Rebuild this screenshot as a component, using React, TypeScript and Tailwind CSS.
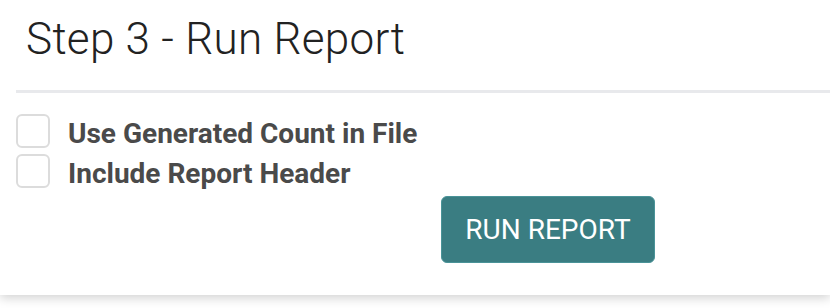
import { useState } from 'react';

const OPTIONS = ['Use Generated Count in File', 'Include Report Header'];

export default function App() {
  const [checked, setChecked] = useState<boolean[]>([false, false]);

  return (
    <div className="min-h-[308px] bg-white" style={{ fontFamily: 'Roboto, "Liberation Sans", sans-serif' }}>
      <div className="bg-white pb-[32px] shadow-[0_3px_10px_rgba(0,0,0,0.18)]">
        <h1 className="pl-[26px] pt-[17px] text-[44px] font-light leading-[44px] tracking-[0.3px] text-[#222]">Step 3 - Run Report</h1>
        <div className="ml-4 mt-[29px] h-[3px] bg-[#e8e9ec]" />

        <div className="mt-[21px] pl-4">
          {OPTIONS.map((label, i) => (
            <label key={label} className="flex h-[40px] cursor-pointer items-start gap-[18px]">
              <input
                type="checkbox"
                className="peer sr-only"
                checked={checked[i]}
                onChange={() => setChecked((c) => c.map((v, j) => (j === i ? !v : v)))}
              />
              <span className="h-[34px] w-[34px] shrink-0 rounded-md border-2 border-[#dcdcdc] bg-white" />
              <span className="text-[28px] font-bold leading-[40px] text-[#4a4a4a]">{label}</span>
            </label>
          ))}
        </div>

        <div className="mt-[2px] flex pl-[441px]">
          <button className="h-[67px] w-[214px] rounded-md border border-[#4a9398] bg-[#3a7d82] text-[28px] text-white">
            RUN REPORT
          </button>
        </div>
      </div>
    </div>
  );
}
